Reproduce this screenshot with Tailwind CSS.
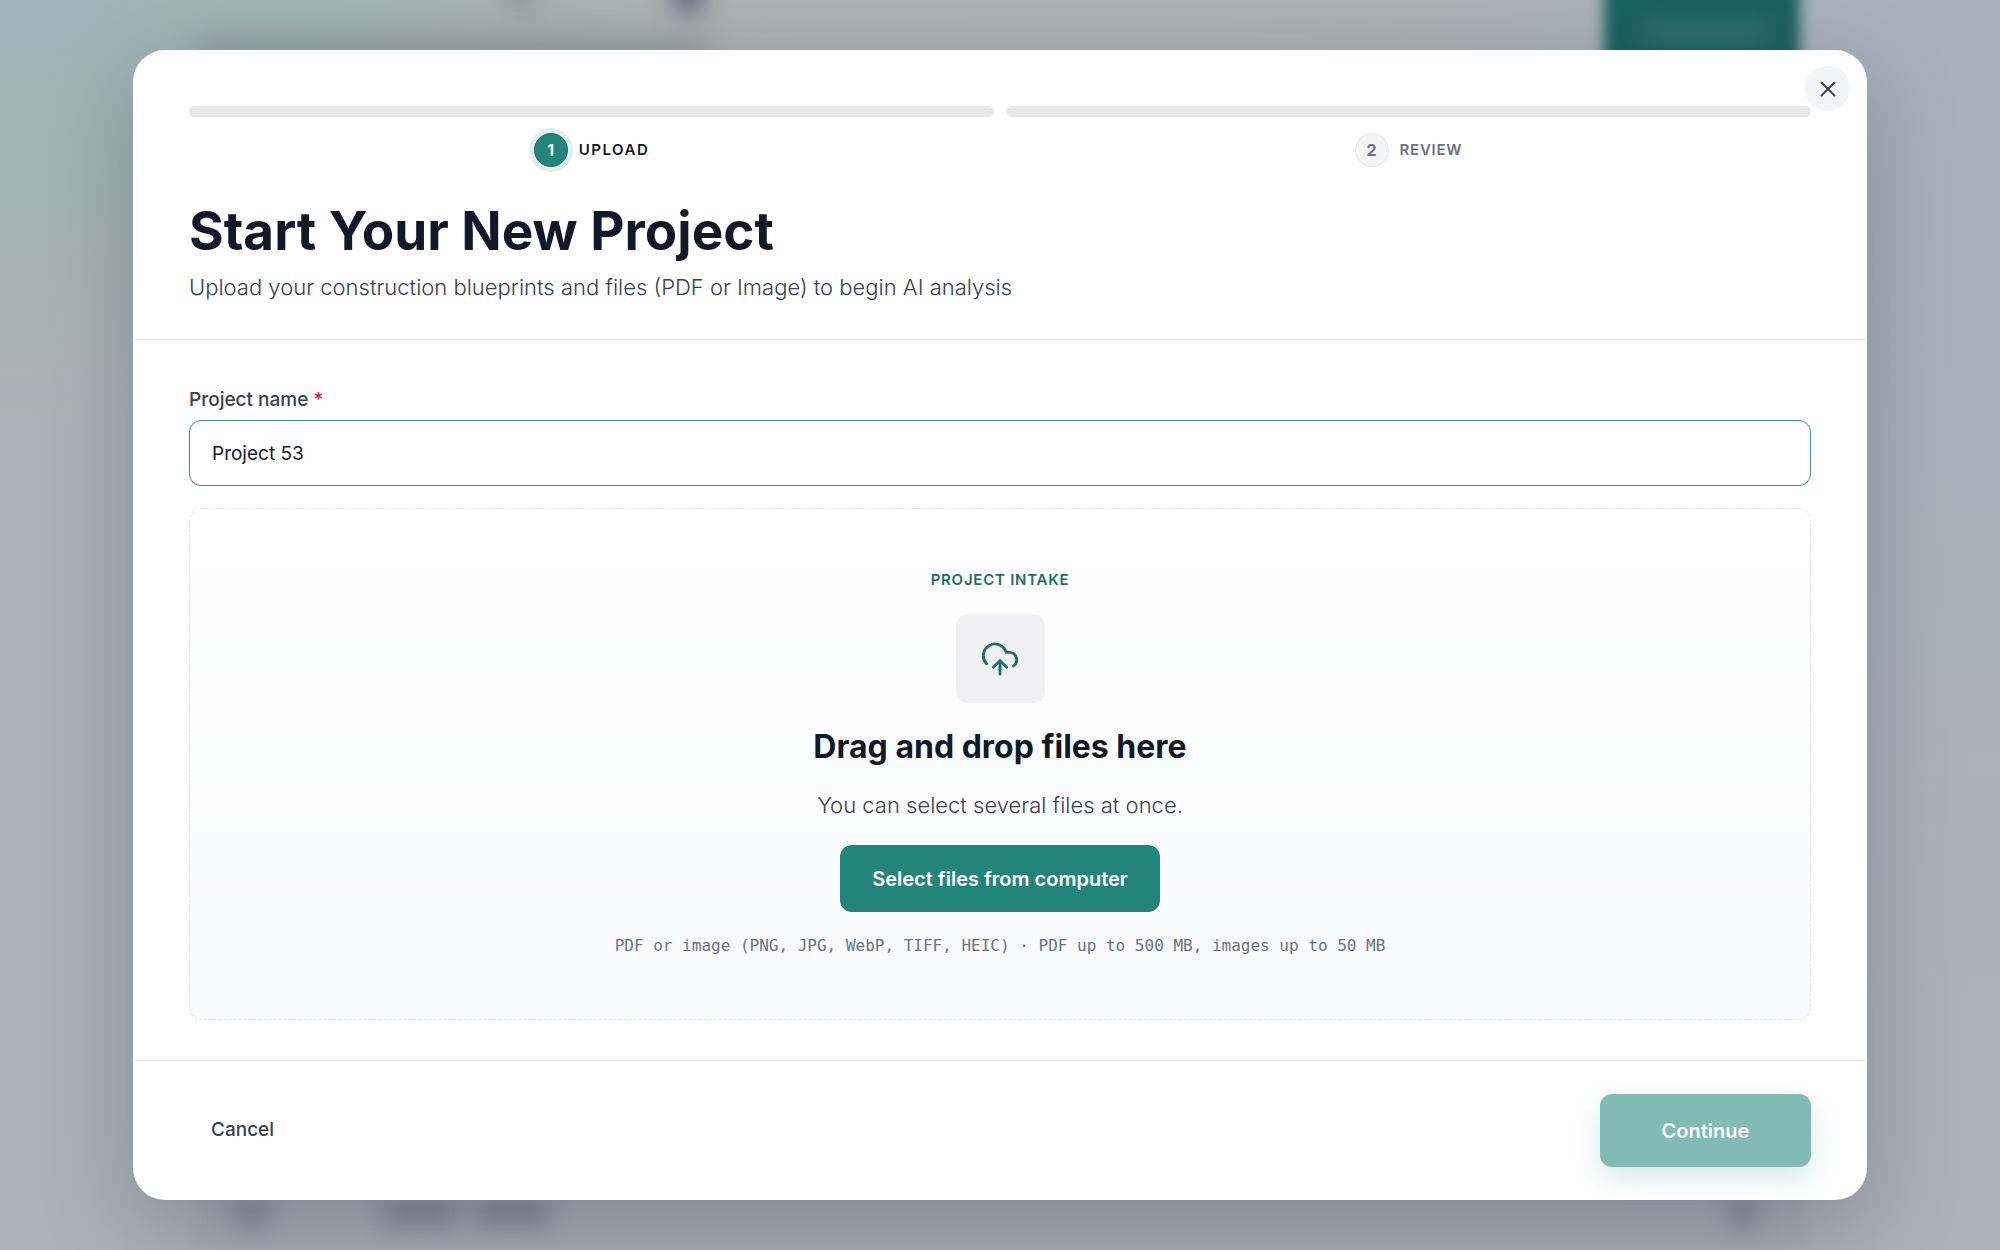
<!DOCTYPE html>
<html lang="en">
    <head>
        <meta charset="UTF-8" />
        <meta name="viewport" content="width=device-width, initial-scale=1.0" />
        <title>Start Your New Project</title>
        <script src="https://cdn.jsdelivr.net/npm/@tailwindcss/browser@4"></script>
    </head>
    <body
        class="relative min-h-screen overflow-hidden bg-[#adb1b9] font-['Inter',sans-serif] text-[#111827]"
    >
        <!-- blurred page behind the dialog -->
        <div
            class="absolute inset-0 bg-[radial-gradient(ellipse_800px_420px_at_0%_0%,#9fb4ba_0%,#a2b4b3_45%,#a2b4b300_100%),radial-gradient(ellipse_800px_900px_at_100%_10%,#a8b1bc_0%,#a9b2b9_50%,#a9b2b900_100%),radial-gradient(ellipse_900px_300px_at_55%_0%,#afb2b5_0%,#afb2b500_100%)]"
            aria-hidden="true"
        >
            <div class="absolute left-[510px] -top-3 w-6 h-6 bg-[#8f949c] blur-md"></div>
            <div class="absolute left-[674px] -top-5 w-7 h-8 bg-[#5d6174] blur-md"></div>
            <div class="absolute left-[200px] top-10 w-[510px] h-4 bg-[#858d96]/80 blur-md"></div>
            <div class="absolute right-[200px] -top-12 w-[196px] h-[130px] rounded-xl bg-[#1b625e] blur-[7px]"></div>
            <div class="absolute right-[232px] top-6 w-[124px] h-4 bg-[#4d807c]/70 blur-md"></div>
            <div class="absolute inset-x-[196px] bottom-0 h-20 bg-[#a9acb4] blur-xs"></div>
            <div class="absolute left-[236px] bottom-6 w-8 h-7 bg-[#777a8a]/70 blur-md"></div>
            <div class="absolute left-[382px] bottom-6 w-[76px] h-7 bg-[#777a8a]/70 blur-md"></div>
            <div class="absolute left-[474px] bottom-6 w-[76px] h-7 bg-[#777a8a]/70 blur-md"></div>
            <div class="absolute right-[246px] bottom-6 w-6 h-7 bg-[#777a8a]/80 blur-md"></div>
        </div>

        <div class="relative flex min-h-screen px-[133px] py-[50px]">
            <div
                role="dialog"
                aria-modal="true"
                aria-labelledby="dialogTitle"
                class="relative flex w-full flex-col rounded-[32px] bg-white shadow-[0_28px_90px_#11182740]"
            >
                <button
                    type="button"
                    aria-label="Close"
                    class="absolute right-[17px] top-4 z-10 flex size-[45px] items-center justify-center rounded-full bg-[#f3f4f6] text-[#374151]"
                >
                    <svg class="size-[26px]" viewBox="0 0 24 24" fill="none" stroke="currentColor" stroke-width="1.8" stroke-linecap="round" stroke-linejoin="round">
                        <path d="M18 6 6 18" />
                        <path d="m6 6 12 12" />
                    </svg>
                </button>

                <header class="border-b border-[#e5e7eb] px-14 pt-14 pb-9">
                    <ol class="grid grid-cols-2 gap-3">
                        <li>
                            <div class="h-[11px] rounded-full bg-[#e5e7eb]"></div>
                            <div class="mt-4 flex items-center justify-center gap-[11px]">
                                <span class="flex size-[34px] items-center justify-center rounded-full border border-[#1d6f68] bg-[#23847a] text-base font-bold text-white ring-[5px] ring-[#e0eeec]">1</span>
                                <span class="text-[15px] font-semibold tracking-widest">UPLOAD</span>
                            </div>
                        </li>
                        <li>
                            <div class="h-[11px] rounded-full bg-[#e5e7eb]"></div>
                            <div class="mt-4 flex items-center justify-center gap-[11px] text-[#6b7280]">
                                <span class="flex size-[34px] items-center justify-center rounded-full border border-[#e5e7eb] bg-[#f3f4f6] text-base font-bold">2</span>
                                <span class="text-[15px] font-semibold tracking-wider">REVIEW</span>
                            </div>
                        </li>
                    </ol>
                    <h1 id="dialogTitle" class="mt-8 text-[53px] leading-[64px] font-bold">
                        Start Your New Project
                    </h1>
                    <p class="mt-2 text-[22px] leading-8 font-light text-[#374151]">
                        Upload your construction blueprints and files (PDF or Image) to begin AI analysis
                    </p>
                </header>

                <form id="projectForm" class="flex grow flex-col px-14 pt-[46px] pb-10">
                    <label for="projectName" class="text-[19px] leading-7 font-medium text-[#374151]">
                        Project name <span class="text-[#dc2626]">*</span>
                    </label>
                    <input
                        type="text"
                        id="projectName"
                        name="projectName"
                        value="Project 53"
                        class="mt-[6px] h-[66px] w-full rounded-xl border border-[#3f9389] px-[22px] text-[19px] outline-none"
                        required
                    />

                    <div
                        class="mt-[22px] flex grow flex-col items-center justify-center rounded-xl border border-dashed border-[#dfe2ea] bg-linear-to-b from-white to-[#f9fafc]"
                    >
                        <p class="text-[15px] leading-6 font-semibold tracking-wider text-[#1f6f66]">
                            PROJECT INTAKE
                        </p>
                        <div class="mt-[22px] flex size-[89px] items-center justify-center rounded-xl bg-[#f0f0f2] text-[#1f6f66]">
                            <svg class="size-10" viewBox="0 0 24 24" fill="none" stroke="currentColor" stroke-width="1.7" stroke-linecap="round" stroke-linejoin="round">
                                <path d="M12 13v8" />
                                <path d="M4 14.899A7 7 0 1 1 15.71 8h1.79a4.5 4.5 0 0 1 2.5 8.242" />
                                <path d="m8 17 4-4 4 4" />
                            </svg>
                        </div>
                        <h2 class="mt-6 text-[32px] leading-10 font-bold">
                            Drag and drop files here
                        </h2>
                        <p class="mt-[22px] text-[22px] leading-8 font-light text-[#374151]">
                            You can select several files at once.
                        </p>
                        <button
                            type="button"
                            class="mt-6 h-[67px] rounded-xl bg-[#23847a] px-8 text-xl font-semibold text-white"
                        >
                            Select files from computer
                        </button>
                        <p class="mt-[22px] mb-[2px] font-['DejaVu_Sans_Mono',monospace] text-base leading-6 text-[#6b7280]">
                            PDF or image (PNG, JPG, WebP, TIFF, HEIC) · PDF up to 500 MB, images up to 50 MB
                        </p>
                    </div>
                </form>

                <footer class="flex items-center justify-between border-t border-[#e5e7eb] px-14 py-[33px]">
                    <button type="button" class="px-[22px] py-4 text-[19px] font-medium text-[#374151]">
                        Cancel
                    </button>
                    <button
                        type="submit"
                        form="projectForm"
                        class="h-[73px] w-[211px] rounded-xl bg-[#82bab4] text-xl font-semibold text-white shadow-[0_11px_28px_#23847a2e]"
                    >
                        Continue
                    </button>
                </footer>
            </div>
        </div>
    </body>
</html>
